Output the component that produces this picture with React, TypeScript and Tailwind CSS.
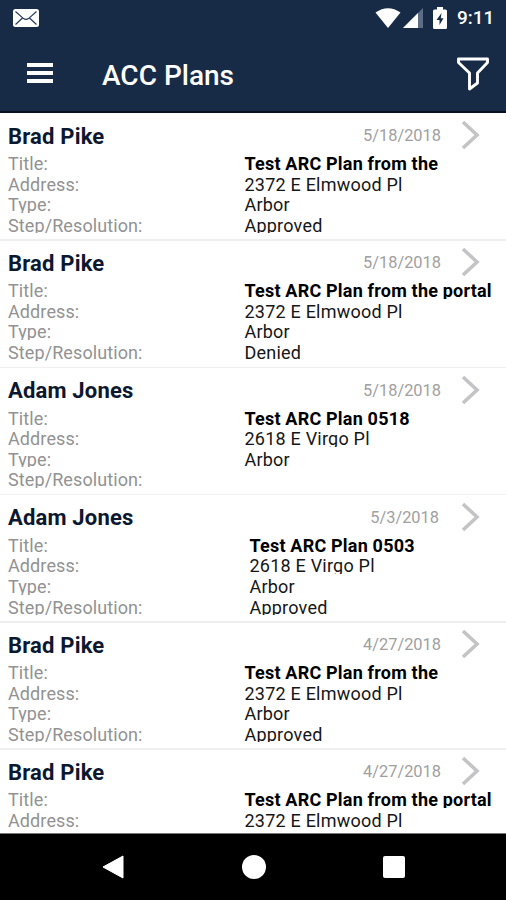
interface Plan {
  name: string;
  date: string;
  title: string;
  address: string;
  type: string;
  step: string;
  narrow?: boolean;
}

const plans: Plan[] = [
  { name: "Brad Pike", date: "5/18/2018", title: "Test ARC Plan from the", address: "2372 E Elmwood Pl", type: "Arbor", step: "Approved" },
  { name: "Brad Pike", date: "5/18/2018", title: "Test ARC Plan from the portal", address: "2372 E Elmwood Pl", type: "Arbor", step: "Denied" },
  { name: "Adam Jones", date: "5/18/2018", title: "Test ARC Plan 0518", address: "2618 E Virgo Pl", type: "Arbor", step: "" },
  { name: "Adam Jones", date: "5/3/2018", title: "Test ARC Plan 0503", address: "2618 E Virgo Pl", type: "Arbor", step: "Approved", narrow: true },
  { name: "Brad Pike", date: "4/27/2018", title: "Test ARC Plan from the", address: "2372 E Elmwood Pl", type: "Arbor", step: "Approved" },
  { name: "Brad Pike", date: "4/27/2018", title: "Test ARC Plan from the portal", address: "2372 E Elmwood Pl", type: "Arbor", step: "Approved" },
];

function StatusBar() {
  return (
    <div className="flex h-9 items-center pl-[13px] pr-[10px]">
      <svg width="26" height="18" viewBox="0 0 26 18">
        <rect width="26" height="18" rx="2.5" fill="#fff" />
        <path d="M2.5 2.5 10.5 9.6Q13 11.2 15.5 9.6L23.5 2.5M2.5 15.5 9.5 9M23.5 15.5 16.5 9" fill="none" stroke="#263a55" strokeWidth="1.2" />
      </svg>
      <div className="ml-auto flex items-center">
        <svg width="26" height="20" viewBox="0 0 26 20">
          <path d="M.5 4.5Q13-4 25.5 4.5L13 20Z" fill="#fff" />
        </svg>
        <svg className="ml-[2px]" width="20" height="20" viewBox="0 0 20 20">
          <path d="M0 20 20 0V20Z" fill="#5c6d85" />
          <path d="M0 20 15 5V20Z" fill="#fff" />
        </svg>
        <svg className="ml-[10px]" width="14" height="22" viewBox="0 0 14 22">
          <path d="M4 0h6v2.5h2.5Q14 2.5 14 4v16.5Q14 22 12.5 22h-11Q0 22 0 20.5V4Q0 2.5 1.5 2.5H4Z" fill="#fff" />
          <path d="M8.5 6 3.5 13H6.5V18L10.5 11.2H7.8Z" fill="#172a46" />
        </svg>
        <span className="ml-[10px] w-[39px] whitespace-nowrap text-[19px] font-medium leading-9 text-white">9:11</span>
      </div>
    </div>
  );
}

function Header() {
  return (
    <div className="flex h-[77px] items-center border-b-2 border-[#08111f] pl-[27px] pr-[17px]">
      <div className="flex w-[26px] flex-col gap-1 pb-px">
        <div className="h-1 bg-white" />
        <div className="h-1 bg-white" />
        <div className="h-1 bg-white" />
      </div>
      <h1 className="ml-[49px] mt-[4px] whitespace-nowrap text-[28px] font-medium text-white">ACC Plans</h1>
      <svg className="ml-auto" width="32" height="34" viewBox="0 0 32 34">
        <path d="M1.5 2H30.5V5.5L20.5 16V26L12.5 32V16L1.5 5.5Z" fill="none" stroke="#fff" strokeWidth="2.9" strokeLinejoin="round" />
      </svg>
    </div>
  );
}

function Field({ label, value, bold, narrow }: { label: string; value: string; bold?: boolean; narrow?: boolean }) {
  // the line box is shorter than the text, so descenders get cut off
  return (
    <div className="flex h-[20.6px] overflow-hidden whitespace-nowrap text-[18px] leading-[26.8px]">
      <span className={narrow ? "w-[241.5px] shrink-0 tracking-[0.1px] text-[#929292]" : "w-[236.5px] shrink-0 tracking-[0.1px] text-[#929292]"}>{label}</span>
      <span className={bold ? "font-bold tracking-[0.2px] text-black" : "tracking-[0.22px] text-[#161616]"}>{value}</span>
    </div>
  );
}

function PlanRow({ plan }: { plan: Plan }) {
  return (
    <div className="h-[127.25px] shrink-0 pl-2">
      <div className="flex h-[38px] items-center">
        <span className="mt-[8px] text-[22px] font-bold tracking-[0.18px] text-[#0c1730]">{plan.name}</span>
        <span className={plan.narrow ? "ml-auto mr-[22px] mt-[9px] text-[16.4px] text-[#a0a0a0]" : "ml-auto mr-[20px] mt-[9px] text-[16.4px] text-[#a0a0a0]"}>{plan.date}</span>
        <svg className="mr-[26px] mt-[6px]" width="19" height="30" viewBox="0 0 19 30">
          <path d="M2 2 16 15 2 28" fill="none" stroke="#c4c4c6" strokeWidth="3.6" />
        </svg>
      </div>
      <div>
        <Field label="Title:" value={plan.title} bold narrow={plan.narrow} />
        <Field label="Address:" value={plan.address} narrow={plan.narrow} />
        <Field label="Type:" value={plan.type} narrow={plan.narrow} />
        <Field label="Step/Resolution:" value={plan.step} narrow={plan.narrow} />
      </div>
      <div className="-ml-2 mt-[6px] h-[1.5px] bg-[#efefef]" />
    </div>
  );
}

export default function App() {
  return (
    <div className="flex h-[900px] w-[506px] flex-col overflow-hidden bg-white font-['Roboto',sans-serif]">
      <div className="shrink-0 bg-[#172a46]">
        <StatusBar />
        <Header />
      </div>
      <div className="flex min-h-0 flex-1 flex-col overflow-hidden">
        {plans.map((plan, i) => (
          <PlanRow key={i} plan={plan} />
        ))}
      </div>
      <div className="flex h-[67px] shrink-0 items-center border-t border-[#777] bg-black pl-[102px]">
        <svg width="22" height="24" viewBox="0 0 22 24">
          <path d="M21 1V23L1 12Z" fill="#fff" stroke="#fff" strokeLinejoin="round" />
        </svg>
        <div className="ml-[118px] size-6 rounded-full bg-white" />
        <div className="ml-[117px] size-[22px] rounded-[2px] bg-white" />
      </div>
    </div>
  );
}
